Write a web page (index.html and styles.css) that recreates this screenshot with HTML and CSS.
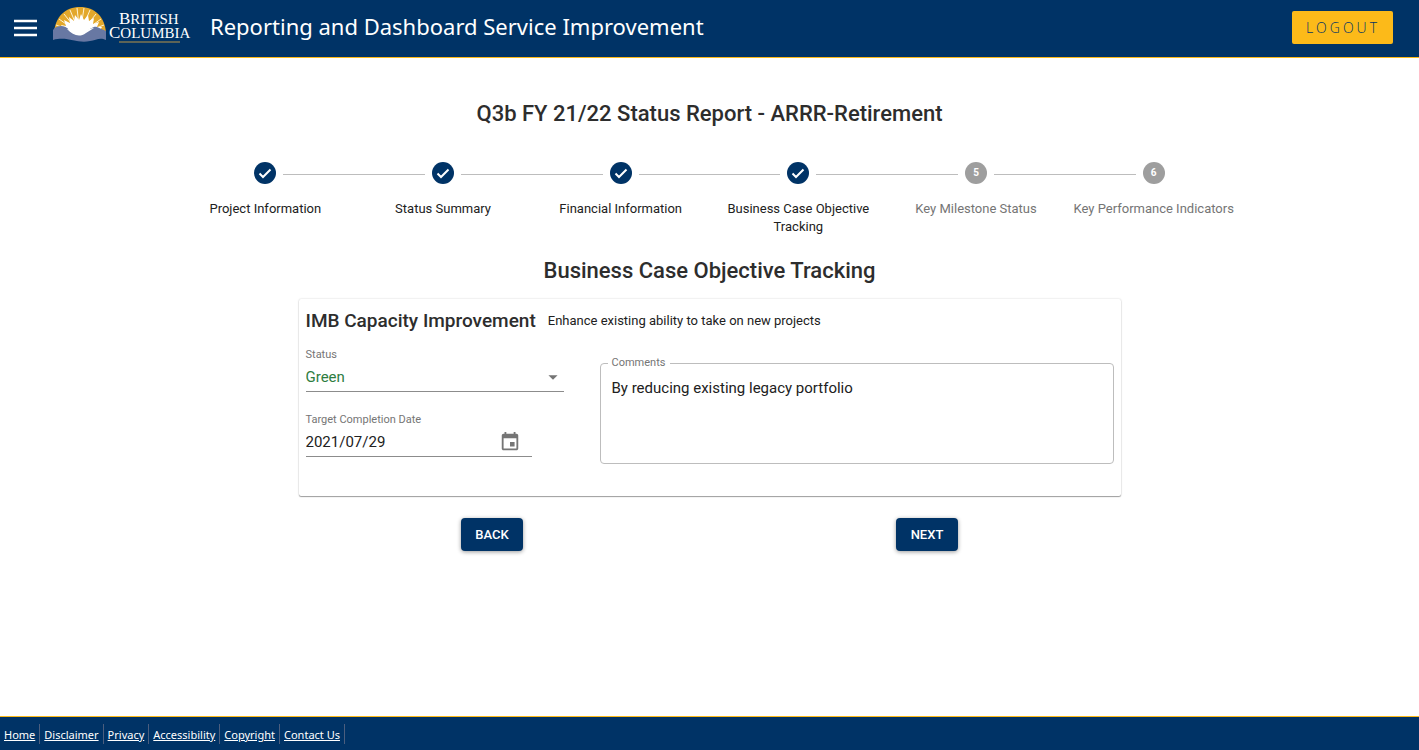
FILE: index.html
```html
<!DOCTYPE html>
<html lang="en">
<head>
<meta charset="utf-8">
<meta name="viewport" content="width=device-width, initial-scale=1">
<title>Reporting and Dashboard Service Improvement</title>
<link rel="stylesheet" href="styles.css">
</head>
<body>
<header class="header">
  <button class="menu-button" type="button" aria-label="Open menu">
    <svg width="24" height="18" viewBox="0 0 24 18" aria-hidden="true"><path d="M1 2h23M1 9h23M1 16h23" stroke="#fff" stroke-width="2.400"/></svg>
  </button>
  <svg class="logo" width="138" height="40" viewBox="0 0 138 40" role="img" aria-label="British Columbia">
    <path d="M1 27C2 11 12 1 27 1s25 10 26 26z" fill="#e3a82b"/>
    <path d="M27 28L3 19M27 28L6 13M27 28L11 8M27 28L17 4M27 28L24 2M27 28L31 2M27 28L37 4M27 28L43 8M27 28L48 13M27 28L51 19" stroke="#fff3cf"/>
    <path d="M9 28l-3-4 5 0-3-5 5 1-2-6 6 3-1-6 5 4 1-6 4 5 2-6 3 6 4-5 1 6 5-3-1 6 6-2-2 5 5 0-3 5 4 1-5 3z" fill="#fff"/>
    <path d="M0 34V24c2-3 5-4 8-4s6 1 9 5c5 4 10 5 14 2 7-5 10-7 13-6l9 4v9c-6-3-10 0-16 1-13 3-22-5-37-1z" fill="#6878a3"/>
    <path d="M14 23c6 6 12 9 19 4l8-5c-6 0-9 4-14 4-4 0-7-3-13-3z" fill="#fff"/>
    <g class="logo-text" fill="#fff">
      <text x="66" y="18"><tspan class="logo-cap">B</tspan>RITISH</text>
      <text x="56" y="32"><tspan class="logo-cap">C</tspan>OLUMBIA</text>
    </g>
    <path d="M66 36h61" stroke="#5d6456" stroke-width="2"/>
  </svg>
  <h1 class="app-title">Reporting and Dashboard Service Improvement</h1>
  <button class="logout" type="button">LOGOUT</button>
</header>

<main class="main">
  <h2 class="page-title">Q3b FY 21/22 Status Report - ARRR-Retirement</h2>
  <ol class="stepper">
    <li class="step"><span class="step-icon"><svg viewBox="0 0 22 22" aria-hidden="true"><path d="M5.500 11.500l3.500 3.500 7.500-7.500"/></svg></span><span class="step-label">Project Information</span></li>
    <li class="step"><span class="step-icon"><svg viewBox="0 0 22 22" aria-hidden="true"><path d="M5.500 11.500l3.500 3.500 7.500-7.500"/></svg></span><span class="step-label">Status Summary</span></li>
    <li class="step"><span class="step-icon"><svg viewBox="0 0 22 22" aria-hidden="true"><path d="M5.500 11.500l3.500 3.500 7.500-7.500"/></svg></span><span class="step-label">Financial Information</span></li>
    <li class="step" aria-current="step"><span class="step-icon"><svg viewBox="0 0 22 22" aria-hidden="true"><path d="M5.500 11.500l3.500 3.500 7.500-7.500"/></svg></span><span class="step-label">Business Case Objective Tracking</span></li>
    <li class="step pending"><span class="step-icon">5</span><span class="step-label">Key Milestone Status</span></li>
    <li class="step pending"><span class="step-icon">6</span><span class="step-label">Key Performance Indicators</span></li>
  </ol>

  <h2 class="section-title">Business Case Objective Tracking</h2>
  <form class="form">
    <section class="card">
      <div class="card-head">
        <h3 class="objective">IMB Capacity Improvement</h3>
        <p class="description">Enhance existing ability to take on new projects</p>
      </div>
      <div class="card-body">
        <div class="fields">
          <div class="field">
            <label class="label" for="status">Status</label>
            <div class="control">
              <select class="input status" id="status"><option>Green</option><option>Yellow</option><option>Red</option></select>
              <svg class="arrow" width="22" height="22" viewBox="0 0 24 24" aria-hidden="true"><path d="M7 10l5 5 5-5z" fill="#757575"/></svg>
            </div>
          </div>
          <div class="field date">
            <label class="label" for="target">Target Completion Date</label>
            <div class="control">
              <input class="input" id="target" type="text" value="2021/07/29">
              <button class="calendar" type="button" aria-label="Choose date">
                <svg width="22" height="22" viewBox="0 0 24 24" aria-hidden="true"><path fill="#757575" d="M17 12h-5v5h5v-5zM16 1v2H8V1H6v2H5c-1.110 0-1.990.9-1.990 2L3 19c0 1.100.890 2 2 2h14c1.100 0 2-.9 2-2V5c0-1.100-.9-2-2-2h-1V1h-2zm3 18H5V8h14v11z"/></svg>
              </button>
            </div>
          </div>
        </div>
        <fieldset class="comments">
          <legend><label for="comments">Comments</label></legend>
          <textarea id="comments" rows="4">By reducing existing legacy portfolio</textarea>
        </fieldset>
      </div>
    </section>
    <div class="actions">
      <button class="button" type="button">BACK</button>
      <button class="button" type="button">NEXT</button>
    </div>
  </form>
</main>

<footer class="footer">
  <nav class="footer-nav" aria-label="Footer">
    <a href="#">Home</a><a href="#">Disclaimer</a><a href="#">Privacy</a><a href="#">Accessibility</a><a href="#">Copyright</a><a href="#">Contact Us</a>
  </nav>
</footer>
</body>
</html>
```
FILE: styles.css
```css
* { box-sizing: border-box; }

body {
  margin: 0;
  min-height: 100vh;
  display: flex;
  flex-direction: column;
  background: #fff;
  color: #212121;
  font: 13px/18px Roboto, sans-serif;
}

h1, h2, h3, p { margin: 0; }
button, input, select, textarea { font-family: inherit; margin: 0; }
button { cursor: pointer; }

.header {
  display: flex;
  align-items: center;
  min-height: 58px;
  padding: 0 26px 2px 13px;
  background: #036;
  border-bottom: 1px solid #fcba19;
}

.menu-button {
  display: flex;
  padding: 0;
  border: 0;
  background: none;
}

.logo { margin: 0 19px 4px 16px; flex: none; }
.logo-text { font: 15px/1 "Liberation Serif", serif; }
.logo-cap { font-size: 17px; }

.app-title {
  flex: 1;
  padding-bottom: 4px;
  color: #fff;
  font: 400 22px/30px "Noto Sans", sans-serif;
}

.logout {
  height: 33px;
  padding: 0 13px 0 14px;
  border: 0;
  border-radius: 2px;
  background: #fcba19;
  color: #036;
  font: 300 14px/20px "Open Sans", sans-serif;
  letter-spacing: 3px;
}

.main {
  flex: 1;
  width: 100%;
  max-width: 1152px;
  margin: 0 auto;
  padding: 40px 43px;
}

.page-title, .section-title {
  color: #2d2d2d;
  font-weight: 500;
  font-size: 22px;
  line-height: 32px;
  text-align: center;
}

.stepper {
  display: flex;
  list-style: none;
  margin: 0;
  padding: 32px 0 19px;
}

.step {
  flex: 1 1 0;
  position: relative;
  display: flex;
  flex-direction: column;
  align-items: center;
  gap: 16px;
  padding: 0 7px;
  text-align: center;
}

/* Connector between a step and the one before it */
.step + .step::before {
  content: "";
  position: absolute;
  top: 12px;
  left: calc(-50% + 18px);
  right: calc(50% + 18px);
  border-top: 1px solid #bdbdbd;
}

.step-icon {
  display: flex;
  align-items: center;
  justify-content: center;
  width: 22px;
  height: 22px;
  border-radius: 50%;
  background: #036;
  color: #fff;
  font-weight: 700;
  font-size: 10px;
}

.step-icon path { fill: none; stroke: #fff; stroke-width: 2; }
.pending .step-icon { background: #9e9e9e; }
.pending .step-label { color: #757575; }

.form { max-width: 822px; margin: 12px auto 0; }

.card {
  padding: 7px 7px 32px;
  border-radius: 2px;
  box-shadow: 0 1px 1px rgba(0, 0, 0, .35), 0 0 2px rgba(0, 0, 0, .2);
}

.card-head { display: flex; align-items: center; gap: 12px; }
.objective { color: #2d2d2d; font-weight: 500; font-size: 19px; line-height: 30px; }

.card-body {
  display: grid;
  grid-template-columns: 258px 1fr;
  gap: 36px;
  padding-top: 12px;
}

.fields { display: flex; flex-direction: column; gap: 21px; }
.field { display: flex; flex-direction: column; }
.date { width: 226px; }
.label, .comments legend { color: #757575; font-size: 11px; line-height: 14px; }

.control {
  display: flex;
  align-items: center;
  position: relative;
  height: 30px;
  border-bottom: 1px solid #8c8c8c;
}

.input {
  flex: 1;
  min-width: 0;
  padding: 0;
  border: 0;
  background: none;
  color: #212121;
  font-size: 15px;
  line-height: 20px;
  appearance: none;
}

.status { color: #2e7d41; }
.arrow { position: absolute; right: 0; pointer-events: none; }
.calendar { display: flex; padding: 0 11px; border: 0; background: none; }

.comments {
  min-width: 0;
  margin: 8px 0 0;
  padding: 9px 7px 8px;
  border: 1px solid #bdbdbd;
  border-radius: 4px;
}

.comments legend { padding: 0 5px 0 4px; }

.comments textarea {
  display: block;
  width: 100%;
  padding: 0 4px;
  border: 0;
  resize: none;
  background: none;
  color: #212121;
  font-size: 15px;
  line-height: 19px;
}

.actions {
  display: grid;
  grid-template-columns: 1fr 1fr;
  justify-items: center;
  margin: 22px -24px 0;
}

.button {
  min-width: 62px;
  height: 33px;
  padding: 0 14px;
  border: 0;
  border-radius: 4px;
  background: #036;
  box-shadow: 0 1px 4px rgba(0, 0, 0, .4);
  color: #fff;
  font-weight: 500;
  font-size: 13px;
}

.footer {
  min-height: 34px;
  padding: 7px 0 6px;
  background: #036;
  border-top: 1px solid #fcba19;
}

.footer-nav { display: flex; flex-wrap: wrap; }

.footer-nav a {
  padding: 2px 4px 0;
  border-right: 1px solid #4b5e7e;
  color: #fff;
  font: 11px/18px "Noto Sans", sans-serif;
}
```
